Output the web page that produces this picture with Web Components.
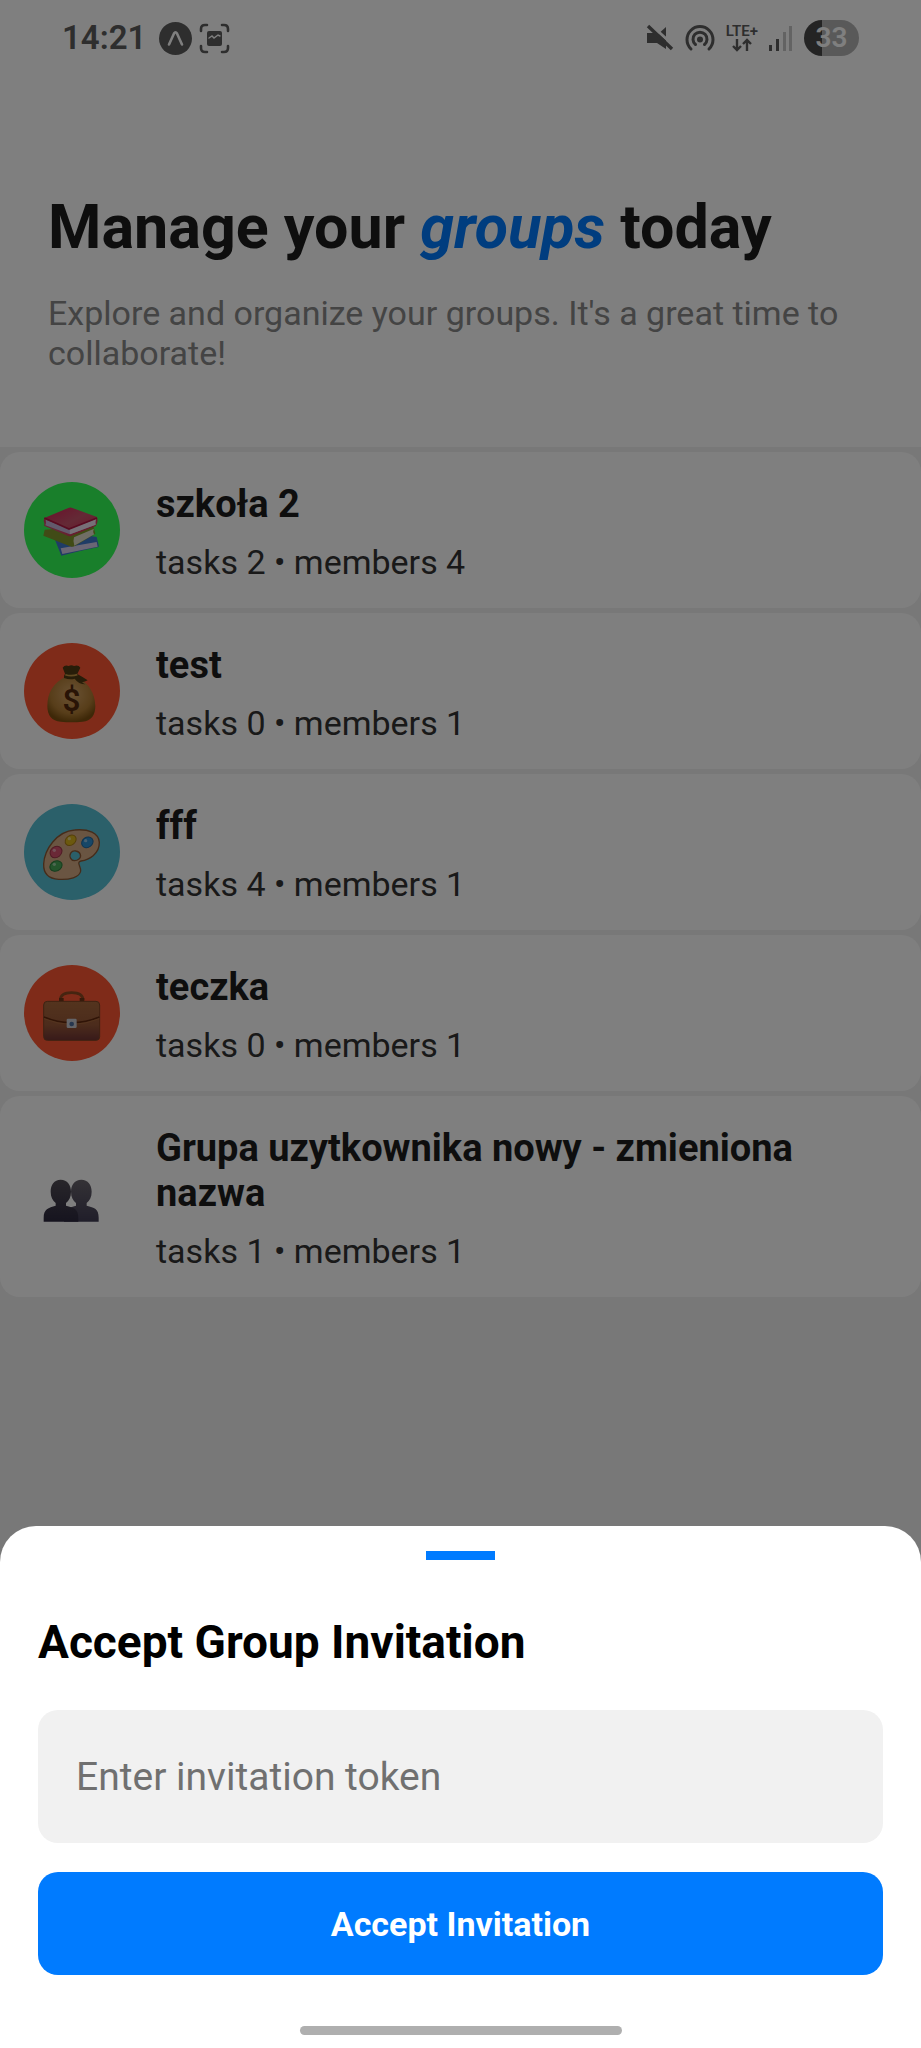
<!DOCTYPE html>
<html lang="en">
<head>
<meta charset="utf-8">
<meta name="viewport" content="width=device-width, initial-scale=1">
<title>Groups</title>
<style>
  html, body { margin: 0; height: 100%; }
  body { font-family: Roboto, "Noto Sans", sans-serif; background: #f1f1f1; color: #1c1c1c; }
</style>
</head>
<body>
<group-app></group-app>

<template id="group-app">
  <style>
    :host { display: block; min-height: 100vh; }
    ul { list-style: none; margin: 0; padding: 5px 0 0; display: flex; flex-direction: column; gap: 5px; }
  </style>
  <status-bar></status-bar>
  <main>
    <page-header>
      Manage your <em slot="accent">groups</em><span slot="tail">today</span>
      <span slot="subtitle">Explore and organize your groups. It's a great time to collaborate!</span>
    </page-header>
    <ul>
      <li><group-card icon="books" color="#33ff57">szkoła 2<span slot="meta">tasks 2 • members 4</span></group-card></li>
      <li><group-card icon="money" color="#ff5733">test<span slot="meta">tasks 0 • members 1</span></group-card></li>
      <li><group-card icon="palette" color="#56c0d4">fff<span slot="meta">tasks 4 • members 1</span></group-card></li>
      <li><group-card icon="case" color="#ff5733">teczka<span slot="meta">tasks 0 • members 1</span></group-card></li>
      <li><group-card icon="people" color="transparent">Grupa uzytkownika nowy - zmieniona nazwa<span slot="meta">tasks 1 • members 1</span></group-card></li>
    </ul>
  </main>
  <bottom-sheet>
    <span slot="title">Accept Group Invitation</span>
    <invite-form></invite-form>
  </bottom-sheet>
</template>

<template id="status-bar">
  <style>
    :host { display: flex; justify-content: space-between; align-items: center; height: 76px; padding: 0 62px; background: #fff; color: #5c5c5c; }
    .side { display: flex; align-items: center; }
    svg { display: block; flex: none; }
    time { font-size: 33px; line-height: 40px; font-weight: 600; }
    .left { gap: 7px; }
    .left .app { margin-left: 6px; }
    .right { gap: 11px; }
    .net { display: flex; flex-direction: column; align-items: center; font-size: 15px; line-height: 14px; font-weight: 600; }
    .battery { display: grid; place-items: center; width: 55px; height: 36px; border-radius: 18px; color: #fff; font-size: 28px; line-height: 36px; font-weight: 600; background: linear-gradient(90deg, #484848 33%, #b2b2b2 33%); }
  </style>
  <div class="side left">
    <time>14:21</time>
    <svg class="app" width="33" height="33" viewBox="0 0 33 33"><circle cx="16.500" cy="16.500" r="16.500" fill="currentColor"/><path d="M10 22.500 15 11.500q1.500-2.500 3 0L23 22.500" fill="none" stroke="#fff" stroke-width="2.600" stroke-linecap="round" stroke-linejoin="round"/></svg>
    <svg width="31" height="31" viewBox="0 0 31 31" fill="none" stroke="currentColor" stroke-width="2.600" stroke-linecap="round"><path d="M2 8V6q0-4 4-4h2M23 2h2q4 0 4 4v2M29 23v2q0 4-4 4h-2M8 29H6q-4 0-4-4v-2"/><path d="M10 8h11q2 0 2 2v11q0 2-2 2H10q-2 0-2-2V10q0-2 2-2z" fill="currentColor" stroke="none"/><path d="m10 15 3-2 2 2 4-3 2 1" stroke="#fff" stroke-width="1.400"/></svg>
  </div>
  <div class="side right">
    <svg width="28" height="28" viewBox="0 0 28 28"><path d="M1 9h7l3 2L20 3v22l-9-6H1z" fill="currentColor"/><path d="M4 0 28 22" stroke="#fff" stroke-width="3"/><path d="M2 2 26 25" stroke="currentColor" stroke-width="3.400"/></svg>
    <svg width="30" height="28" viewBox="0 0 30 28" fill="none" stroke="currentColor" stroke-width="3" stroke-linecap="round"><path d="M6 25a13 13 0 1 1 18 0M10.500 20.500a7 7 0 1 1 9 0"/><circle cx="15" cy="15.500" r="3" fill="currentColor" stroke="none"/></svg>
    <div class="net"><span>LTE+</span>
      <svg width="22" height="14" viewBox="0 0 22 14" fill="none" stroke="currentColor" stroke-width="2.400"><path d="M6 1v11M2 8l4 4 4-4M16 13V2M12 6l4-4 4 4"/></svg></div>
    <svg width="24" height="26" viewBox="0 0 24 26" fill="currentColor"><path d="M0 20h3v6H0zM7 14h3v12H7z"/><path d="M14 7h3v19h-3zM20 1h3v25h-3z" opacity=".35"/></svg>
    <div class="battery">33</div>
  </div>
</template>

<template id="page-header">
  <style>
    :host { display: block; background: #fff; padding: 115px 48px 74px; }
    h1 { margin: 0; font-size: 61px; line-height: 72px; font-weight: 700; }
    ::slotted(em) { color: #007bff; }
    p { margin: 30px 0 0; font-size: 34px; line-height: 40px; color: #888; }
  </style>
  <h1><slot></slot> <slot name="accent"></slot> <slot name="tail"></slot></h1>
  <p><slot name="subtitle"></slot></p>
</template>

<template id="group-card">
  <style>
    :host { display: flex; align-items: center; gap: 36px; padding: 0 24px; background: #fff; border-radius: 20px; }
    .avatar { flex: none; width: 96px; height: 96px; border-radius: 50%; background: var(--avatar); }
    .avatar svg { display: block; width: 96px; height: 96px; }
    .text { padding: 30px 0 26px; min-width: 0; }
    h2 { margin: 0 0 15px; font-size: 38px; line-height: 45px; font-weight: 700; }
    p { margin: 0; font-size: 34px; line-height: 40px; color: #333; }
  </style>
  <div class="avatar"></div>
  <div class="text"><h2><slot></slot></h2><p><slot name="meta"></slot></p></div>
</template>

<template id="bottom-sheet">
  <style>
    :host { position: fixed; inset: 0; display: flex; flex-direction: column; justify-content: flex-end; background: rgba(0, 0, 0, .5); }
    section { background: #fff; border-radius: 36px 36px 0 0; padding: 25px 38px 13px; display: flex; flex-direction: column; }
    .handle { align-self: center; width: 69px; height: 9px; background: #007bff; }
    h2 { margin: 54px 0 40px; font-size: 46px; line-height: 56px; font-weight: 700; color: #000; }
    .home { align-self: center; width: 322px; max-width: 60%; height: 9px; margin-top: 51px; border-radius: 5px; background: #afafaf; }
  </style>
  <section role="dialog" aria-labelledby="t">
    <div class="handle"></div>
    <h2 id="t"><slot name="title"></slot></h2>
    <slot></slot>
    <div class="home"></div>
  </section>
</template>

<template id="invite-form">
  <style>
    :host { display: block; }
    form { display: flex; flex-direction: column; gap: 29px; }
    input, button { box-sizing: border-box; width: 100%; border: 0; border-radius: 20px; font-family: inherit; }
    input { height: 133px; padding: 0 38px; background: #f1f1f1; font-size: 39px; color: #000; }
    input::placeholder { color: #707070; opacity: 1; }
    button { height: 103px; background: #007bff; color: #fff; font-size: 34px; line-height: 40px; font-weight: 700; }
  </style>
  <form>
    <input type="text" name="token" aria-label="Invitation token" placeholder="Enter invitation token">
    <button type="button">Accept Invitation</button>
  </form>
</template>

<script>
  const icons = {
    books: `<svg viewBox="72 125 288 288" aria-hidden="true">
      <defs><linearGradient id="r" x1="0" y1="0" x2="1" y2="1"><stop offset="0" stop-color="#d81e54"/><stop offset=".5" stop-color="#c8546c"/><stop offset="1" stop-color="#d8204c"/></linearGradient></defs>
      <path d="m164 296 20 50q52-14 112-26v-6l-6-24-60-10z" fill="#3f78cc"/><path d="m182 324 108-19 3 14-106 22z" fill="#d5cdea"/>
      <path d="m134 268-4 18 84 33q6 1 12-3l60-36-6-24z" fill="#82962c"/><path d="m222 291 60-26q-5 10 1 17l-60 34q-5-12-1-25z" fill="#e0dcca"/>
      <path d="m133 233 74-31q4-1 8 0l76 28q5 14-4 27l-74 30q-4 1-8 0l-73-31q3-6-1-13z" fill="url(#r)"/>
      <path d="m137 238 72 28 79-30q-3 9-1 17l-77 29-74-27q3-9 1-17z" fill="#c4b4d8"/><path d="m209 266 79-30q-3 9-1 17l-77 29z" fill="#eee0ee"/>
      <path d="m133 233 74 33 84-33" fill="none" stroke="#b01842" stroke-width="5"/></svg>`,
    money: `<svg viewBox="72 607 288 288" aria-hidden="true">
      <defs><radialGradient id="g" cx=".5" cy=".38" r=".62"><stop offset="0" stop-color="#d4a468"/><stop offset=".7" stop-color="#b07c34"/><stop offset="1" stop-color="#7c5010"/></radialGradient></defs>
      <path d="M196 708q-54 28-54 88 0 44 40 47 32 3 66 0 38-4 38-47-2-58-54-88z" fill="url(#g)"/>
      <path d="M188 681q6-9 18-5 8-4 16 0 14-4 19 5l-9 19q18 10 31 19-8 5-17 6 6 4 10 6-20 0-32-17-14 4-32-2-2-5 3-13z" fill="#4e3a12"/>
      <path d="M196 702q17 6 36 0" fill="none" stroke="#c09442" stroke-width="5"/>
      <text x="214" y="810" text-anchor="middle" font-family="Roboto, sans-serif" font-size="94" font-weight="600" fill="#52280c">$</text></svg>`,
    palette: `<svg viewBox="72 128 288 288" aria-hidden="true">
      <path d="M224 206c42-4 72 9 74 37 1 36-32 52-55 56-15 4 0 16-1 30-3 19-34 27-66 25-31-2-46-18-45-46 2-42 38-98 93-102zM228 269c-14-3-22 10-16 22 5 10 18 8 25 2 9-8 4-22-9-24z" fill="#d4aa84" stroke="#8c5834" stroke-width="4" fill-rule="evenodd"/>
      <g stroke-width="3"><ellipse cx="212" cy="237" rx="18" ry="14" transform="rotate(-40 212 237)" fill="#d8b21c" stroke="#a87c14"/><ellipse cx="262" cy="243" rx="18" ry="15" transform="rotate(-35 262 243)" fill="#2c8ed0" stroke="#1c68a0"/><ellipse cx="168" cy="272" rx="19" ry="16" transform="rotate(-40 168 272)" fill="#d4526e" stroke="#a03448"/><ellipse cx="168" cy="314" rx="19" ry="15" transform="rotate(-25 168 314)" fill="#48a858" stroke="#2c7c3c"/></g>
      <g fill="#fff" opacity=".45"><circle cx="208" cy="232" r="5"/><circle cx="257" cy="238" r="5"/><circle cx="163" cy="267" r="5"/><circle cx="163" cy="309" r="5"/></g></svg>`,
    case: `<svg viewBox="72 609 288 288" aria-hidden="true">
      <defs><linearGradient id="b" x1="0" y1="0" x2="0" y2="1"><stop offset="0" stop-color="#a8683c"/><stop offset=".6" stop-color="#985838"/><stop offset="1" stop-color="#703434"/></linearGradient></defs>
      <path d="M181 714q0-22 34-22t34 22" fill="none" stroke="#8c4820" stroke-width="8"/><path d="M177 708h14v12h-14zM239 708h14v12h-14z" fill="#6c3414"/>
      <rect x="131" y="718" width="168" height="117" rx="11" fill="url(#b)" stroke="#7c4424" stroke-width="3"/>
      <path d="M132 765q40 17 83 17t83-17" fill="none" stroke="#60280e" stroke-width="5"/><path d="M132 770q40 17 83 17t83-17" fill="none" stroke="#b07040" stroke-width="2"/>
      <rect x="200" y="770" width="30" height="28" rx="4" fill="#c8c8d0"/><circle cx="215" cy="786" r="7" fill="#4c6c9c"/></svg>`,
    people: `<svg viewBox="72 204 288 288" aria-hidden="true">
      <defs><linearGradient id="p" x1="0" y1="0" x2="0" y2="1"><stop offset="0" stop-color="#68646c"/><stop offset="1" stop-color="#403c54"/></linearGradient><linearGradient id="q" x1="0" y1="0" x2="0" y2="1"><stop offset="0" stop-color="#504c54"/><stop offset="1" stop-color="#2c283e"/></linearGradient></defs>
      <path d="M244 296c20 0 31 15 31 36 0 16-6 27-15 34v8c23 6 36 8 36 36v12H192v-12c0-26 14-30 36-36v-8c-9-7-15-18-15-34 0-21 11-36 31-36z" fill="url(#p)"/>
      <path d="M182 296c20 0 31 15 31 36 0 16-6 27-15 34v8c23 6 37 8 37 36v12H131v-12c0-26 14-30 36-36v-8c-9-7-15-18-15-34 0-21 10-36 30-36z" fill="url(#q)"/></svg>`
  };

  class TemplateElement extends HTMLElement {
    constructor() {
      super();
      this.attachShadow({ mode: "open" })
        .append(document.getElementById(this.localName).content.cloneNode(true));
    }
  }

  class GroupCard extends TemplateElement {
    connectedCallback() {
      const avatar = this.shadowRoot.querySelector(".avatar");
      avatar.style.setProperty("--avatar", this.getAttribute("color"));
      avatar.innerHTML = icons[this.getAttribute("icon")] || "";
    }
  }

  customElements.define("status-bar", class extends TemplateElement {});
  customElements.define("page-header", class extends TemplateElement {});
  customElements.define("group-card", GroupCard);
  customElements.define("bottom-sheet", class extends TemplateElement {});
  customElements.define("invite-form", class extends TemplateElement {});
  customElements.define("group-app", class extends TemplateElement {});
</script>
</body>
</html>
